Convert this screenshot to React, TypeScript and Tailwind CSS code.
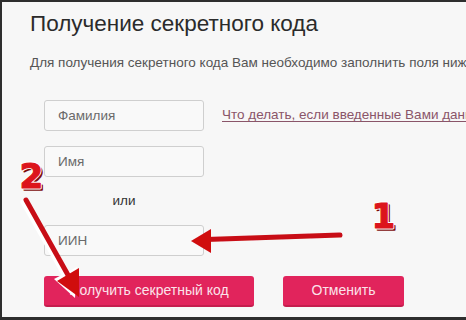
const font = { fontFamily: '"Liberation Sans", Arial, sans-serif' };
const digit = { fontFamily: '"DejaVu Sans", Verdana, sans-serif' };

function Arrows() {
  return (
    <svg className="pointer-events-none absolute left-0 top-0" width="466" height="320" viewBox="0 0 466 320">
      <defs>
        <filter id="soft" x="-20%" y="-20%" width="140%" height="140%">
          <feGaussianBlur stdDeviation="0.5" />
        </filter>
      </defs>
      {/* arrow 1 */}
      <g filter="url(#soft)">
        <line x1="338" y1="233" x2="204" y2="237.5" stroke="#c80f15" strokeWidth="5" strokeLinecap="round" />
        <polygon points="189,239 209,227 209,251" fill="#d0090f" />
      </g>
      {/* arrow 2 */}
      <g filter="url(#soft)">
        <line x1="21" y1="200" x2="63" y2="274" stroke="#ffffff" strokeWidth="5" strokeLinecap="round" />
        <polygon points="52,277 75,265 73,296" fill="#ffffff" />
        <line x1="24" y1="198" x2="66" y2="273" stroke="#c80f15" strokeWidth="5" strokeLinecap="round" />
        <polygon points="55,279 77,266 77,295" fill="#d0090f" />
      </g>
      {/* numbers */}
      <g style={digit} fontSize="34" fontWeight="700" strokeLinejoin="round">
        <text x="19.5" y="187.5" fill="#7d0b0b" stroke="#7d0b0b" strokeWidth="1.4">2</text>
        <text x="17.5" y="185.5" fill="#ffffff" stroke="#ffffff" strokeWidth="3">2</text>
        <text x="17.5" y="185.5" fill="#dc151c" stroke="#dc151c" strokeWidth="1.2">2</text>
        <text x="371.5" y="227.5" fill="#7d0b0b" stroke="#7d0b0b" strokeWidth="1.4">1</text>
        <text x="369.5" y="225.5" fill="#ffffff" stroke="#ffffff" strokeWidth="3">1</text>
        <text x="369.5" y="225.5" fill="#dc151c" stroke="#dc151c" strokeWidth="1.2">1</text>
      </g>
    </svg>
  );
}

export default function App() {
  return (
    <div
      className="relative h-[320px] w-[466px] overflow-hidden border-t-2 border-b-[3px] border-l-2 border-[#2e2e2e] bg-[#f7f7f7] pl-[28px] pt-[9px]"
      style={font}
    >
      <h1 className="text-[22.5px] leading-[26px] font-normal text-[#2b2b2b]">Получение секретного кода</h1>
      <p className="mt-[18px] whitespace-nowrap text-[13.5px] leading-[16px] text-[#555]">
        Для получения секретного кода Вам необходимо заполнить поля ниже
      </p>
      <div className="mt-[29px] flex items-center gap-[18px] pl-[14px]">
        <input
          className="h-[31px] w-[160px] shrink-0 rounded-[3px] border border-[#cfcfcf] bg-[#f9f9f9] px-[13px] text-[13.5px] outline-none placeholder:text-[#6a6a6a]"
          placeholder="Фамилия"
        />
        <a className="whitespace-nowrap text-[13.5px] text-[#8a5569] underline underline-offset-2" href="#">
          Что делать, если введенные Вами данные не найдены?
        </a>
      </div>
      <div className="pl-[14px]">
        <input
          className="mt-[15px] block h-[31px] w-[160px] rounded-[3px] border border-[#cfcfcf] bg-[#f9f9f9] px-[13px] text-[13.5px] outline-none placeholder:text-[#6a6a6a]"
          placeholder="Имя"
        />
        <div className="w-[160px] py-[17px] text-center text-[13.5px] leading-[14px] text-[#333]">или</div>
        <input
          className="block h-[31px] w-[160px] rounded-[3px] border border-[#cfcfcf] bg-[#f9f9f9] px-[13px] text-[13.5px] outline-none placeholder:text-[#6a6a6a]"
          placeholder="ИИН"
        />
        <div className="mt-[20px] flex gap-[29px]">
          <button className="h-[31px] w-[210px] rounded-[3px] border-b-2 border-[#c41d4d] bg-[#e1245c] text-[14px] text-[#fbe3ea]">
            Получить секретный код
          </button>
          <button className="h-[31px] w-[121px] rounded-[3px] border-b-2 border-[#c41d4d] bg-[#e1245c] text-[14px] text-[#fbe3ea]">
            Отменить
          </button>
        </div>
      </div>
      <Arrows />
    </div>
  );
}
